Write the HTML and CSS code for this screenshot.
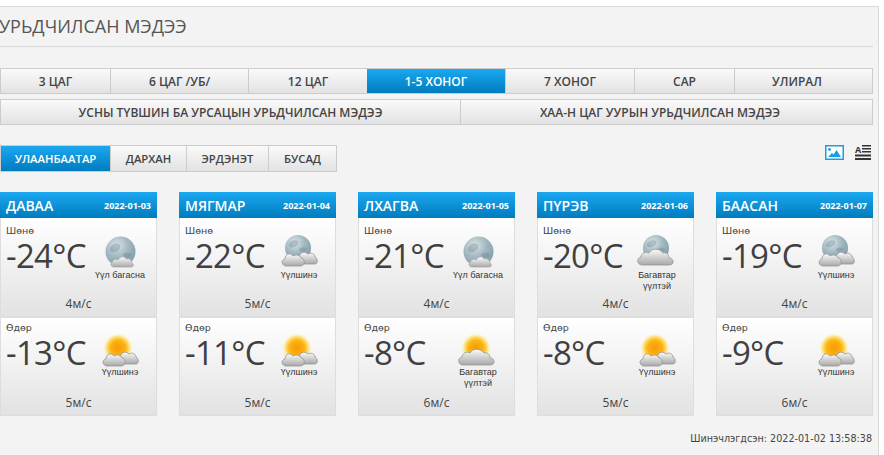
FILE: index.html
```html
<!doctype html>
<html>
<head>
    <meta charset="utf-8">
    <title>Урьдчилсан мэдээ</title>
    <link rel="stylesheet" href="styles.css">
</head>
<body>

<svg class="defs" width="0" height="0">
    <defs>
        <radialGradient id="moon-fill" cx="38%" cy="30%" r="75%">
            <stop offset="0" stop-color="#dbe5e8"/>
            <stop offset="0.5" stop-color="#a3b9c1"/>
            <stop offset="1" stop-color="#7f9ca8"/>
        </radialGradient>
        <radialGradient id="sun-fill">
            <stop offset="0" stop-color="#f99a04"/>
            <stop offset="0.5" stop-color="#fcb313"/>
            <stop offset="0.72" stop-color="#fdd95e"/>
            <stop offset="1" stop-color="#fff3c4" stop-opacity="0"/>
        </radialGradient>
        <linearGradient id="cloud-fill" x1="0" y1="0" x2="0" y2="1">
            <stop offset="0" stop-color="#fbfbfb"/>
            <stop offset="1" stop-color="#a8a8a8"/>
        </linearGradient>
        <filter id="soft"><feGaussianBlur stdDeviation="0.4"/></filter>

        <symbol id="moon" viewBox="0 0 40 36">
            <circle cx="20.5" cy="17.5" r="15" fill="url(#moon-fill)" filter="url(#soft)"/>
            <path d="M10 14c2-4 7-6 10-3 1 3-1 6-4 7s-7 0-6-4zM25 19c3-1 6 0 7 2-2 3-6 4-8 2s-1-3 1-4z" fill="#66828e" opacity=".35" filter="url(#soft)"/>
        </symbol>
        <symbol id="moon-high" viewBox="0 0 40 36">
            <circle cx="19" cy="14" r="13" fill="url(#moon-fill)" filter="url(#soft)"/>
            <path d="M10 10c2-3 6-5 9-3 1 3-1 5-4 6s-6 0-5-3zM22 14c3-1 5 0 6 1-2 3-5 3-7 2s-1-2 1-3z" fill="#66828e" opacity=".35" filter="url(#soft)"/>
        </symbol>
        <symbol id="cloud-small" viewBox="0 0 40 36">
            <path d="M14 33c-3 0-4-3-2-4 0-3 4-5 6-3 2-4 7-4 8-1 3-1 6 1 6 4 2 1 2 4-1 4z" fill="url(#cloud-fill)" stroke="#a5a5a5" stroke-width=".7" filter="url(#soft)"/>
        </symbol>
        <symbol id="cloud-big" viewBox="0 0 40 36">
            <path d="M21 33c-3 0-5-5-1-6 0-5 5-8 9-4 3-2 7 0 7 3 3 1 3 7 0 7z" fill="url(#cloud-fill)" stroke="#949494" stroke-width=".8" filter="url(#soft)"/>
            <path d="M7 35c-4 0-6-6-1-7 0-5 5-7 8-3 3-2 7-1 8 2 4 0 5 8-1 8z" fill="url(#cloud-fill)" stroke="#949494" stroke-width=".8" filter="url(#soft)"/>
        </symbol>
        <symbol id="cloud-mid" viewBox="0 0 40 36">
            <path d="M5 34c-5 0-6-7-1-8 0-4 5-6 8-4 2-5 11-5 14 0 3-1 6 1 6 5 5 0 6 7 0 7z" fill="url(#cloud-fill)" stroke="#949494" stroke-width=".8" filter="url(#soft)"/>
        </symbol>
        <symbol id="sun" viewBox="0 0 40 36">
            <circle cx="18" cy="17" r="15" fill="url(#sun-fill)"/>
        </symbol>
    </defs>
</svg>

<div class="panel">
    <h1 class="title">УРЬДЧИЛСАН МЭДЭЭ</h1>

    <nav class="tabs tabs-main">
        <a>3 ЦАГ</a>
        <a>6 ЦАГ /УБ/</a>
        <a>12 ЦАГ</a>
        <a class="active">1-5 ХОНОГ</a>
        <a>7 ХОНОГ</a>
        <a>САР</a>
        <a>УЛИРАЛ</a>
    </nav>
    <nav class="tabs tabs-extra">
        <a>УСНЫ ТҮВШИН БА УРСАЦЫН УРЬДЧИЛСАН МЭДЭЭ</a>
        <a>ХАА-Н ЦАГ УУРЫН УРЬДЧИЛСАН МЭДЭЭ</a>
    </nav>

    <div class="city-bar">
        <nav class="tabs tabs-city">
            <a class="active">УЛААНБААТАР</a>
            <a>ДАРХАН</a>
            <a>ЭРДЭНЭТ</a>
            <a>БУСАД</a>
        </nav>
        <div class="views">
            <svg width="19" height="15" viewBox="0 0 19 15">
                <rect x="0.75" y="0.75" width="17.5" height="13.5" fill="#fff" stroke="#1a9de2" stroke-width="1.5"/>
                <circle cx="4.5" cy="4.5" r="1.4" fill="#1a9de2"/>
                <path d="M3 12l4-4 1.5 1.5L11.5 5l4.5 7z" fill="#1a9de2"/>
            </svg>
            <svg class="view-list" width="16" height="15" viewBox="0 0 16 15">
                <path d="M0 15v-2h16v2zM0 11.5v-2h16v2zM7 7.5V6h9v1.5zM7 4.5V3h9v1.5zM7 1.5V0h9v1.5z" fill="#333"/>
                <text x="0" y="7.5" class="view-a">A</text>
            </svg>
        </div>
    </div>

    <div class="days">
        <div class="day">
            <div class="day-head"><span class="day-name">ДАВАА</span><span class="day-date">2022-01-03</span></div>
            <div class="part">
                <span class="part-name">Шөнө</span>
                <div class="part-main">
                    <span class="temp">-24°C</span>
                    <div class="sky"><svg viewBox="0 0 40 36"><use href="#moon"/><use href="#cloud-small"/></svg><span>Үүл багасна</span></div>
                </div>
                <span class="wind">4м/с</span>
            </div>
            <div class="part">
                <span class="part-name">Өдөр</span>
                <div class="part-main">
                    <span class="temp">-13°C</span>
                    <div class="sky"><svg viewBox="0 0 40 36"><use href="#sun"/><use href="#cloud-big"/></svg><span>Үүлшинэ</span></div>
                </div>
                <span class="wind">5м/с</span>
            </div>
        </div>

        <div class="day">
            <div class="day-head"><span class="day-name">МЯГМАР</span><span class="day-date">2022-01-04</span></div>
            <div class="part">
                <span class="part-name">Шөнө</span>
                <div class="part-main">
                    <span class="temp">-22°C</span>
                    <div class="sky"><svg viewBox="0 0 40 36"><use href="#moon-high"/><use href="#cloud-big" y="-3"/></svg><span>Үүлшинэ</span></div>
                </div>
                <span class="wind">5м/с</span>
            </div>
            <div class="part">
                <span class="part-name">Өдөр</span>
                <div class="part-main">
                    <span class="temp">-11°C</span>
                    <div class="sky"><svg viewBox="0 0 40 36"><use href="#sun"/><use href="#cloud-big"/></svg><span>Үүлшинэ</span></div>
                </div>
                <span class="wind">5м/с</span>
            </div>
        </div>

        <div class="day">
            <div class="day-head"><span class="day-name">ЛХАГВА</span><span class="day-date">2022-01-05</span></div>
            <div class="part">
                <span class="part-name">Шөнө</span>
                <div class="part-main">
                    <span class="temp">-21°C</span>
                    <div class="sky"><svg viewBox="0 0 40 36"><use href="#moon"/><use href="#cloud-small"/></svg><span>Үүл багасна</span></div>
                </div>
                <span class="wind">4м/с</span>
            </div>
            <div class="part">
                <span class="part-name">Өдөр</span>
                <div class="part-main">
                    <span class="temp">-8°C</span>
                    <div class="sky"><svg viewBox="0 0 40 36"><use href="#sun"/><use href="#cloud-mid"/></svg><span>Багавтар үүлтэй</span></div>
                </div>
                <span class="wind">6м/с</span>
            </div>
        </div>

        <div class="day">
            <div class="day-head"><span class="day-name">ПҮРЭВ</span><span class="day-date">2022-01-06</span></div>
            <div class="part">
                <span class="part-name">Шөнө</span>
                <div class="part-main">
                    <span class="temp">-20°C</span>
                    <div class="sky"><svg viewBox="0 0 40 36"><use href="#moon-high"/><use href="#cloud-mid" y="-3"/></svg><span>Багавтар үүлтэй</span></div>
                </div>
                <span class="wind">4м/с</span>
            </div>
            <div class="part">
                <span class="part-name">Өдөр</span>
                <div class="part-main">
                    <span class="temp">-8°C</span>
                    <div class="sky"><svg viewBox="0 0 40 36"><use href="#sun"/><use href="#cloud-big"/></svg><span>Үүлшинэ</span></div>
                </div>
                <span class="wind">5м/с</span>
            </div>
        </div>

        <div class="day">
            <div class="day-head"><span class="day-name">БААСАН</span><span class="day-date">2022-01-07</span></div>
            <div class="part">
                <span class="part-name">Шөнө</span>
                <div class="part-main">
                    <span class="temp">-19°C</span>
                    <div class="sky"><svg viewBox="0 0 40 36"><use href="#moon-high"/><use href="#cloud-big" y="-3"/></svg><span>Үүлшинэ</span></div>
                </div>
                <span class="wind">4м/с</span>
            </div>
            <div class="part">
                <span class="part-name">Өдөр</span>
                <div class="part-main">
                    <span class="temp">-9°C</span>
                    <div class="sky"><svg viewBox="0 0 40 36"><use href="#sun"/><use href="#cloud-big"/></svg><span>Үүлшинэ</span></div>
                </div>
                <span class="wind">6м/с</span>
            </div>
        </div>
    </div>

    <p class="updated">Шинэчлэгдсэн: 2022-01-02 13:58:38</p>
</div>

</body>
</html>
```

FILE: styles.css
```css
html, body {
    margin: 0;
    background: #fff;
    overflow: hidden;
}
body {
    padding-top: 6px;
    font-family: "Open Sans", sans-serif;
    color: #333;
}
.defs {
    position: absolute;
}

.panel {
    box-sizing: border-box;
    width: 879px;
    height: 449px;
    padding-right: 5px;
    background: #f3f3f3;
    border-top: 1px solid #d9d9d9;
    border-right: 1px solid #d9d9d9;
}
.title {
    margin: 0;
    height: 39px;
    line-height: 39px;
    font-size: 18px;
    font-weight: 400;
    color: #555;
    border-bottom: 1px solid #d9d9d9;
    text-indent: -1px;
    white-space: nowrap;
}

.tabs {
    display: grid;
    box-sizing: border-box;
    border: 1px solid #ccc;
}
.tabs a {
    display: flex;
    align-items: center;
    justify-content: center;
    font-size: 12px;
    font-weight: 600;
    color: #444;
    background: linear-gradient(#fafafa, #e2e2e2);
    border-left: 1px solid #ccc;
}
.tabs a:first-child {
    border-left: 0;
}
.tabs a.active {
    color: #fff;
    background: linear-gradient(#1ba8f0, #007cbe);
    border-left: 0;
}
.tabs-main {
    grid-template-columns: 109px 138px 119px 138px 129px 100px 1fr;
    height: 26px;
    margin-top: 21px;
}
.tabs-extra {
    grid-template-columns: 459px 1fr;
    height: 26px;
    margin-top: 5px;
}
.tabs-main a:last-child,
.tabs-extra a:last-child {
    padding-right: 13px;
}

.city-bar {
    display: flex;
    justify-content: space-between;
    align-items: flex-start;
    margin-top: 20px;
}
.tabs-city {
    grid-template-columns: 109px 76px 82px 68px;
    width: 337px;
    height: 27px;
}
.tabs-city a {
    font-size: 11.3px;
}
.views {
    display: flex;
    gap: 11px;
    padding-right: 2px;
}
.view-list {
    overflow: visible;
}
.view-a {
    font-family: "Open Sans", sans-serif;
    font-size: 9px;
    font-weight: 700;
    fill: #333;
}

.days {
    display: flex;
    gap: 22px;
    margin-top: 20px;
}
.day {
    box-sizing: border-box;
    width: 157px;
    height: 224px;
    background: #dedede;
    border-right: 1px solid #ddd;
    border-bottom: 1px solid #ddd;
    border-left: 1px solid #ddd;
}
.day-head {
    display: flex;
    align-items: center;
    justify-content: space-between;
    height: 26px;
    margin: 0 -1px;
    padding: 0 6px;
    color: #fff;
    background: linear-gradient(#1ba8f0, #007cbe);
}
.day-name {
    font-size: 14px;
    font-weight: 600;
}
.day-date {
    font-size: 9px;
    font-weight: 700;
}
.part {
    display: flex;
    flex-direction: column;
    box-sizing: border-box;
    height: 98px;
    padding: 6px 0 4px 5px;
    background: linear-gradient(#fff, #e2e2e2);
}
.part + .part {
    height: 97px;
    margin-top: 2px;
    padding-top: 3px;
}
.part-name {
    font-family: "DejaVu Sans", sans-serif;
    font-size: 9.5px;
    line-height: 13px;
    color: #444;
}
.part-main {
    display: flex;
    align-items: flex-start;
    justify-content: space-between;
}
.temp {
    font-size: 33px;
    line-height: 38px;
    letter-spacing: -0.7px;
    color: #404040;
}
.sky {
    display: flex;
    flex-direction: column;
    align-items: center;
    width: 56px;
    margin-right: 8px;
    margin-top: -3px;
    font-family: "Liberation Sans", sans-serif;
    font-size: 9px;
    line-height: 11px;
    text-align: center;
    color: #333;
}
.sky svg {
    width: 40px;
    height: 36px;
}
.wind {
    margin-top: auto;
    margin-left: -5px;
    text-align: center;
    font-size: 12px;
    line-height: 16px;
    color: #444;
}

.updated {
    margin: 17px 1px 0 0;
    text-align: right;
    font-family: "DejaVu Sans", sans-serif;
    font-size: 9.6px;
    color: #444;
}
```
